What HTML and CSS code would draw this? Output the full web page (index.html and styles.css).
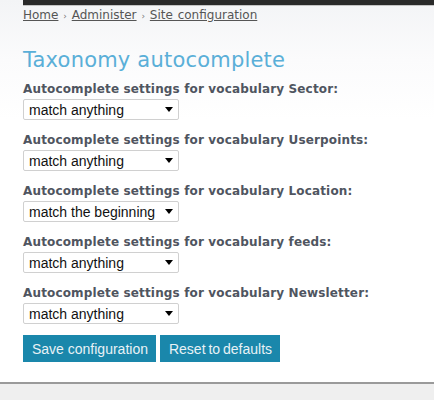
FILE: index.html
```html
<!DOCTYPE html>
<html>
<head>
<meta charset="utf-8">
<link rel="stylesheet" href="styles.css">
</head>
<body>
<div class="page">
  <div class="topbar"></div>
  <div class="breadcrumb"><a href="#">Home</a> <span class="sep">›</span> <a href="#">Administer</a> <span class="sep">›</span> <a href="#">Site configuration</a></div>
  <h1 class="title">Taxonomy autocomplete</h1>
  <form class="form">
    <div class="item">
      <label class="label">Autocomplete settings for vocabulary Sector:</label>
      <select class="select"><option>match anything</option><option>match the beginning</option></select>
    </div>
    <div class="item">
      <label class="label">Autocomplete settings for vocabulary Userpoints:</label>
      <select class="select"><option>match anything</option><option>match the beginning</option></select>
    </div>
    <div class="item">
      <label class="label">Autocomplete settings for vocabulary Location:</label>
      <select class="select"><option>match the beginning</option><option>match anything</option></select>
    </div>
    <div class="item">
      <label class="label">Autocomplete settings for vocabulary feeds:</label>
      <select class="select"><option>match anything</option><option>match the beginning</option></select>
    </div>
    <div class="item">
      <label class="label">Autocomplete settings for vocabulary Newsletter:</label>
      <select class="select"><option>match anything</option><option>match the beginning</option></select>
    </div>
    <div class="actions">
      <button type="button" class="btn">Save configuration</button>
      <button type="button" class="btn btn-reset">Reset to defaults</button>
    </div>
  </form>
</div>
<div class="footer"></div>
</body>
</html>
```
FILE: styles.css
```css
html, body {
  margin: 0;
  padding: 0;
}
body {
  background: #efefef;
  font-family: "DejaVu Sans", Verdana, sans-serif;
}
.page {
  background: linear-gradient(to bottom, #f3f4f6 0px, #fbfbfc 60px, #ffffff 120px);
  height: 384px;
  box-sizing: border-box;
  border-bottom: 2px solid #9a9a9a;
  box-shadow: 0 1px 1px #c8c8c8;
}
.topbar {
  margin-left: 23px;
  height: 5px;
  background: #2a2a2a;
  border-bottom: 1px solid #c4c4c4;
}
.breadcrumb {
  padding-left: 23px;
  margin-top: 2px;
  font-size: 12px;
  line-height: 14px;
  color: #555;
  word-spacing: 1px;
}
.breadcrumb a {
  color: #555;
  text-decoration: underline;
}
.breadcrumb .sep {
  font-size: 9px;
  color: #777;
}
.title {
  margin: 24px 0 0 23px;
  font-size: 21px;
  line-height: 26px;
  font-weight: normal;
  color: #5aafd8;
  letter-spacing: 0.2px;
}
.form {
  padding-left: 23px;
  margin-top: 9px;
  display: flex;
  flex-direction: column;
  align-items: flex-start;
  gap: 13px;
}
.item {
  display: flex;
  flex-direction: column;
  align-items: flex-start;
  gap: 3px;
}
.label {
  font-size: 12px;
  line-height: 14px;
  font-weight: bold;
  letter-spacing: 0.15px;
  color: #4f5560;
}
.select {
  -webkit-appearance: none;
  appearance: none;
  width: 156px;
  height: 21px;
  box-sizing: border-box;
  border: 1px solid #d0d0d0;
  border-radius: 2px;
  background: #fff url("data:image/svg+xml;utf8,<svg xmlns='http://www.w3.org/2000/svg' width='8' height='5'><path d='M0 0h8L4 5z' fill='black'/></svg>") no-repeat right 5px center;
  font-family: "Liberation Sans", Arial, sans-serif;
  font-size: 14px;
  color: #111;
  padding: 0 0 0 5px;
  margin: 0;
}
.actions {
  display: flex;
  gap: 4px;
  margin-top: -2px;
}
.btn {
  background: #1a87ab;
  color: #e8f2f6;
  border: none;
  border-radius: 0;
  font-family: "Liberation Sans", Arial, sans-serif;
  font-size: 14px;
  height: 27px;
  padding: 0 8px 0 9px;
  margin: 0;
}
.btn-reset {
  word-spacing: -1px;
}
.footer {
  height: 14px;
  background: #efefef;
}
```
